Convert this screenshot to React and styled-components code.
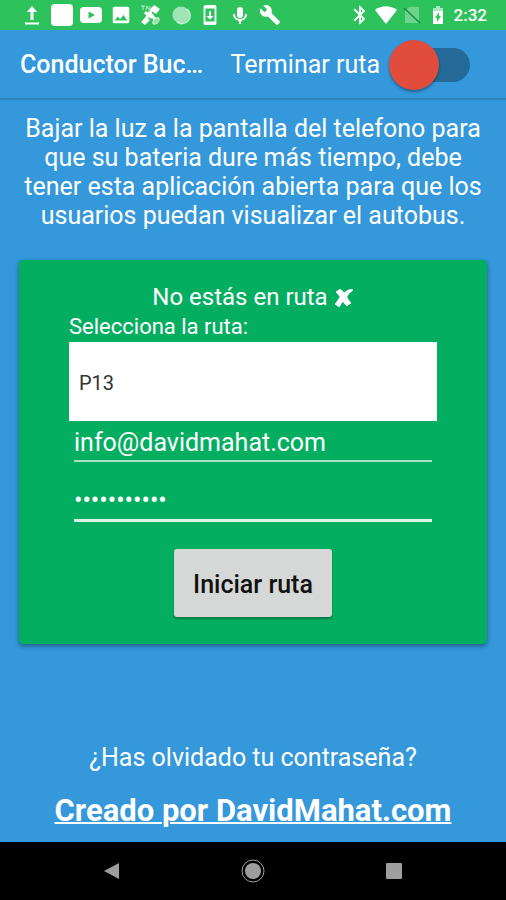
import React, { useState } from "react";
import styled, { createGlobalStyle } from "styled-components";
import {
  MdBluetooth,
  MdBuild,
  MdImage,
  MdSystemUpdate,
} from "react-icons/md";

const GlobalStyle = createGlobalStyle`
  *, *::before, *::after {
    box-sizing: border-box;
  }

  body {
    margin: 0;
    background-color: #3498db;
    color: white;
    font-family: Roboto, "Liberation Sans", sans-serif;
  }

  input, select, button {
    font-family: inherit;
  }
`;

const Page = styled.div`
  display: flex;
  flex-direction: column;
  min-height: 100vh;
`;

const StatusBar = styled.div`
  display: flex;
  align-items: center;
  justify-content: space-between;
  height: 30px;
  padding: 0 19px 0 17px;
  background-color: #2dc25c;
`;

const Notifications = styled.div`
  display: grid;
  grid-template-columns: repeat(9, 1fr);
  flex: 0 0 57%;
  justify-items: center;
`;

const SystemIcons = styled.div`
  display: flex;
  align-items: center;
  gap: 4px;
`;

const StatusIcon = styled.svg`
  display: block;
  width: 22px;
  height: 22px;
  fill: white;
`;

const Clock = styled.span`
  padding-left: 1px;
  font-size: 17px;
  line-height: 22px;
  font-weight: 500;
`;

const Toolbar = styled.header`
  display: flex;
  align-items: center;
  justify-content: space-between;
  height: 70px;
  padding: 2px 36px 0 20px;
  border-bottom: 2px solid #2d85c0;
`;

const Title = styled.h1`
  margin: 0;
  font-size: 25px;
  line-height: 32px;
  font-weight: 500;
`;

const SwitchLabel = styled.label`
  display: flex;
  align-items: center;
  gap: 20px;
  font-size: 25px;
  line-height: 32px;
`;

const Switch = styled.input`
  appearance: none;
  position: relative;
  width: 70px;
  height: 34px;
  margin: 0;
  border-radius: 17px;
  background-color: #246a99;
  cursor: pointer;

  &::before {
    content: "";
    position: absolute;
    top: -8px;
    left: ${(props) => (props.checked ? "30px" : "-11px")};
    width: 50px;
    height: 50px;
    border-radius: 50%;
    background-color: #e24c3c;
    box-shadow: 0 2px 3px rgba(0, 0, 0, 0.35);
  }
`;

const Main = styled.main`
  display: flex;
  flex-direction: column;
  flex: 1;
  padding: 14px 19px 12px;
`;

const Notice = styled.p`
  margin: 0 0 30px;
  font-size: 25px;
  line-height: 29px;
  text-align: center;
`;

const RouteForm = styled.form`
  display: flex;
  flex-direction: column;
  padding: 22px 50px 27px;
  border-radius: 4px;
  background-color: #03ae60;
  box-shadow: 0 2px 5px rgba(0, 0, 0, 0.4);
`;

const RouteStatus = styled.p`
  display: flex;
  align-items: center;
  justify-content: center;
  gap: 6px;
  margin: 0;
  font-size: 24px;
  line-height: 30px;
`;

const CrossMark = styled.svg`
  width: 20px;
  height: 20px;
  fill: white;
  stroke: white;
  stroke-width: 2px;
  stroke-linejoin: round;
`;

const Label = styled.label`
  font-size: 22px;
  line-height: 30px;
`;

const Select = styled.select`
  appearance: none;
  height: 79px;
  padding: 2px 10px 0;
  border: none;
  border-radius: 0;
  background-color: white;
  color: #333;
  font-size: 20px;
`;

const Input = styled.input`
  height: ${(props) => (props.type === "password" ? "60px" : "41px")};
  margin: 0 5px;
  padding: ${(props) => (props.type === "password" ? "20px 0 0" : "4px 0 0")};
  border: none;
  border-bottom: ${(props) =>
    props.type === "password" ? "3px solid #d9f3e5" : "2px solid #a3dfc0"};
  border-radius: 0;
  outline: none;
  background: transparent;
  color: white;
  font-size: 25px;
`;

const Button = styled.button`
  align-self: center;
  height: 68px;
  margin-top: 27px;
  padding: 2px 19px 0;
  border: none;
  border-radius: 3px;
  background-color: #d6d7d7;
  box-shadow: 0 2px 2px rgba(0, 0, 0, 0.3);
  color: #111;
  font-size: 25px;
  font-weight: 500;
  cursor: pointer;
`;

const Footer = styled.footer`
  display: flex;
  flex-direction: column;
  align-items: center;
  gap: 18px;
  margin-top: auto;
`;

const FooterLink = styled.a`
  color: white;
  font-size: ${(props) => (props.$strong ? "31px" : "25px")};
  line-height: ${(props) => (props.$strong ? "38px" : "32px")};
  font-weight: ${(props) => (props.$strong ? 700 : 400)};
  text-decoration: ${(props) => (props.$strong ? "underline" : "none")};
  text-decoration-thickness: 2px;
`;

const NavBar = styled.nav`
  display: grid;
  grid-template-columns: repeat(3, 1fr);
  justify-items: center;
  align-items: center;
  height: 58px;
  padding: 0 42px;
  background-color: black;
`;

const NavButton = styled.button`
  display: flex;
  align-items: center;
  justify-content: center;
  width: 40px;
  height: 40px;
  padding: 0;
  border: none;
  background: none;
  cursor: pointer;
`;

const NavIcon = styled.svg`
  width: 24px;
  height: 24px;
  fill: #9e9e9e;
`;

const NotificationIcons = () => (
  <Notifications>
    <StatusIcon viewBox="0 0 22 22">
      <path d="M11 2l-5 6h3.500v8h3V8H16zM4 18.500h14v2H4z" />
    </StatusIcon>
    <StatusIcon viewBox="0 0 22 22">
      <rect x="0" y="0" width="22" height="22" rx="4" />
    </StatusIcon>
    <StatusIcon viewBox="0 0 22 22">
      <path
        fillRule="evenodd"
        d="M4 3h14c3 0 4 1.500 4 4v8c0 2.500-1 4-4 4H4c-3 0-4-1.500-4-4V7c0-2.500 1-4 4-4zm4.500 4.500v7L15 11z"
      />
    </StatusIcon>
    <StatusIcon as={MdImage} />
    <StatusIcon viewBox="0 0 22 22">
      <path d="M14 1l6 4-4 5-6-4zM9 7l5 4-3 4-5-4zM6 13l4 3-5 5-4-3z" />
      <path
        d="M1 2h4M3 2v4M6 6l1-4 2 4M10 2v4"
        fill="none"
        stroke="white"
        strokeOpacity="0.7"
      />
      <path d="M13 4L4 18M5 8l3 3M12 12l3 3" stroke="white" strokeWidth="3" />
      <path
        d="M13 20c-1-4 2-7 6-6 1 3-2 7-6 6z"
        fillOpacity="0.5"
        stroke="white"
        strokeOpacity="0.7"
      />
    </StatusIcon>
    <StatusIcon viewBox="0 0 22 22">
      <circle cx="11" cy="11" r="8.500" fillOpacity="0.55" />
      <path
        d="M17 5a8 8 0 0 1-10 13"
        fill="none"
        stroke="white"
        strokeWidth="1.500"
        strokeOpacity="0.7"
      />
    </StatusIcon>
    <StatusIcon as={MdSystemUpdate} stroke="white" />
    <StatusIcon viewBox="0 0 22 22">
      <rect x="8" y="3" width="6" height="11" rx="3" />
      <path
        d="M5 10c0 8 12 8 12 0M11 16v4"
        fill="none"
        stroke="white"
        strokeWidth="2"
      />
    </StatusIcon>
    <StatusIcon as={MdBuild} />
  </Notifications>
);

const App = () => {
  const [finished, setFinished] = useState(false);
  const [route, setRoute] = useState("P13");
  const [email, setEmail] = useState("info@davidmahat.com");
  const [password, setPassword] = useState("conductor13");

  const handleSubmit = (event) => {
    event.preventDefault();
  };

  return (
    <Page>
      <GlobalStyle />
      <StatusBar>
        <NotificationIcons />
        <SystemIcons>
          <StatusIcon as={MdBluetooth} stroke="white" />
          <StatusIcon viewBox="0 0 22 22">
            <path d="M0 6C7 1 15 1 22 6L11 20z" />
          </StatusIcon>
          <StatusIcon viewBox="0 0 22 22">
            <path d="M8 3h10v16H4V7z" fillOpacity="0.3" />
            <path d="M3 4l16 15" stroke="#178a40" strokeWidth="1.500" />
          </StatusIcon>
          <StatusIcon viewBox="0 0 22 22">
            <path d="M9 2h4v2h3v4H6V4h3z" fillOpacity="0.6" />
            <path fillRule="evenodd" d="M6 7h10v13H6zm6 1l-4 6h2v4l4-6h-2z" />
          </StatusIcon>
          <Clock>2:32</Clock>
        </SystemIcons>
      </StatusBar>
      <Toolbar>
        <Title>Conductor Buc…</Title>
        <SwitchLabel>
          Terminar ruta
          <Switch
            type="checkbox"
            role="switch"
            checked={finished}
            onChange={(event) => setFinished(event.target.checked)}
          />
        </SwitchLabel>
      </Toolbar>
      <Main>
        <Notice>
          Bajar la luz a la pantalla del telefono para que su bateria dure más
          tiempo, debe tener esta aplicación abierta para que los usuarios
          puedan visualizar el autobus.
        </Notice>
        <RouteForm onSubmit={handleSubmit}>
          <RouteStatus>
            No estás en ruta
            <CrossMark viewBox="0 0 20 20">
              <path d="M3 5l3-2c2 1 3 3 4 4 2-2 4-4 8-4-3 2-5 5-6 7 1 2 2 4 4 6l-3 2c-2-2-3-3-4-5-2 2-3 4-4 6l-3-2c2-3 3-4 5-7-1-2-2-3-4-5z" />
            </CrossMark>
          </RouteStatus>
          <Label htmlFor="route">Selecciona la ruta:</Label>
          <Select
            id="route"
            value={route}
            onChange={(event) => setRoute(event.target.value)}
          >
            <option value="P13">P13</option>
          </Select>
          <Input
            type="email"
            aria-label="Email"
            value={email}
            onChange={(event) => setEmail(event.target.value)}
          />
          <Input
            type="password"
            aria-label="Contraseña"
            value={password}
            onChange={(event) => setPassword(event.target.value)}
          />
          <Button type="submit">Iniciar ruta</Button>
        </RouteForm>
        <Footer>
          <FooterLink href="#recuperar">¿Has olvidado tu contraseña?</FooterLink>
          <FooterLink href="#creador" $strong>
            Creado por DavidMahat.com
          </FooterLink>
        </Footer>
      </Main>
      <NavBar>
        <NavButton type="button" aria-label="Atrás">
          <NavIcon viewBox="0 0 24 24">
            <path d="M4 12l15-8v16z" />
          </NavIcon>
        </NavButton>
        <NavButton type="button" aria-label="Inicio">
          <NavIcon viewBox="0 0 24 24">
            <circle cx="12" cy="12" r="8" />
            <circle cx="12" cy="12" r="11" fill="none" stroke="#9e9e9e" />
          </NavIcon>
        </NavButton>
        <NavButton type="button" aria-label="Recientes">
          <NavIcon viewBox="0 0 24 24">
            <rect x="4" y="4" width="16" height="16" rx="1" />
          </NavIcon>
        </NavButton>
      </NavBar>
    </Page>
  );
};

export default App;
